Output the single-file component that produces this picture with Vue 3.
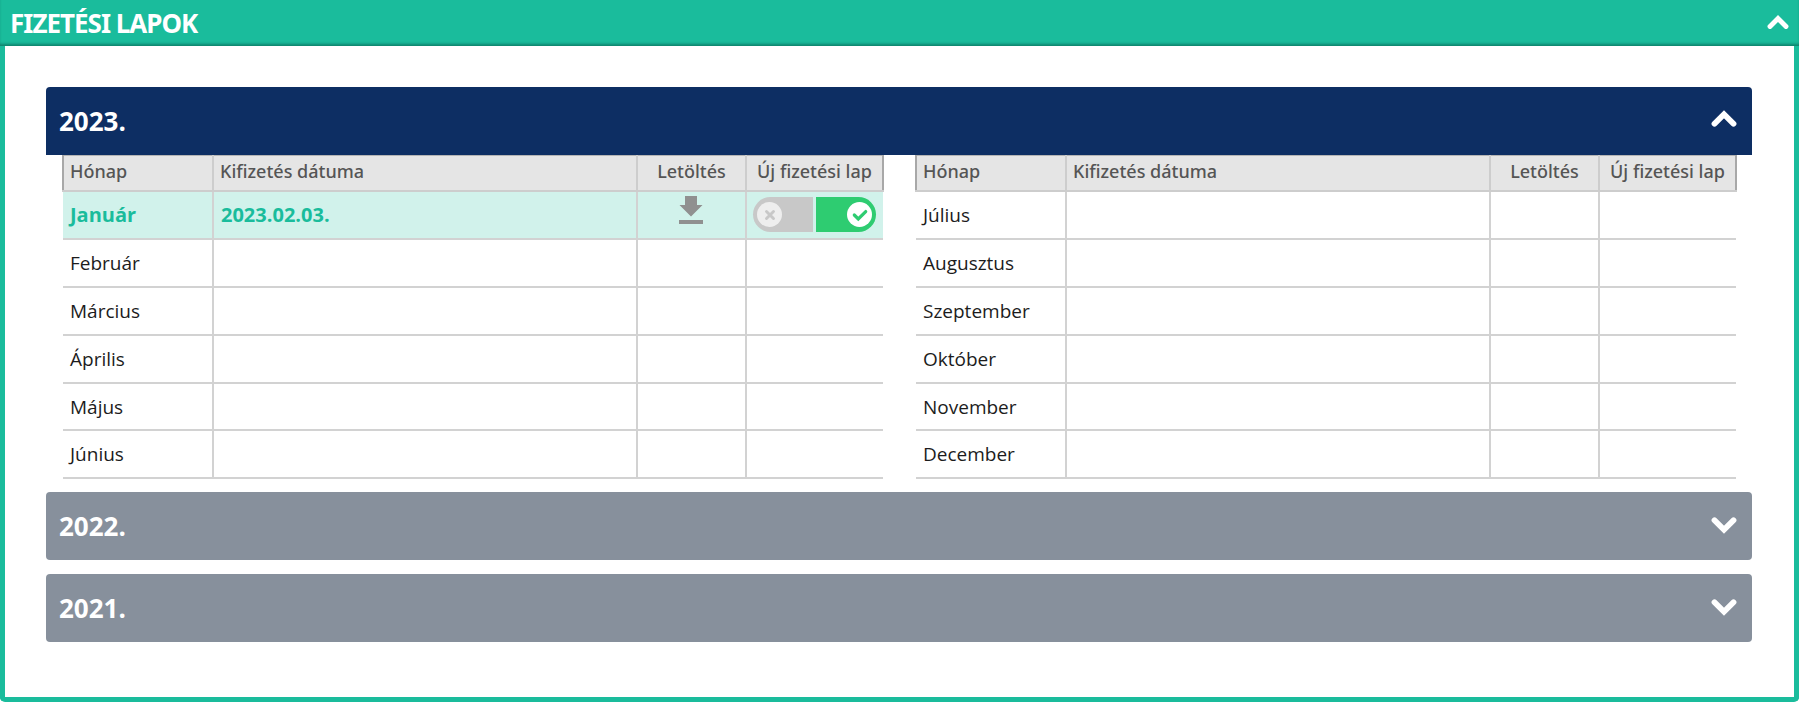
<script setup>
const left = ['Február', 'Március', 'Április', 'Május', 'Június']
const right = ['Július', 'Augusztus', 'Szeptember', 'Október', 'November', 'December']
</script>

<template>
  <div class="panel">
    <div class="bar">
      <span class="bar-title">FIZETÉSI LAPOK</span>
      <svg class="chev bar-chev" viewBox="0 0 26 18"><path d="M4 14 13 5l9 9" /></svg>
    </div>
    <div class="body">
      <div class="year active">
        <span>2023.</span>
        <svg class="chev chev-up" viewBox="0 0 26 18"><path d="M4 14 13 5l9 9" /></svg>
      </div>
      <div class="tables">
        <table>
          <thead>
            <tr><th class="c1">Hónap</th><th class="c2">Kifizetés dátuma</th><th class="c3 ctr">Letöltés</th><th class="c4 ctr">Új fizetési lap</th></tr>
          </thead>
          <tbody>
            <tr class="hit">
              <td>Január</td>
              <td>2023.02.03.</td>
              <td class="ctr">
                <svg class="dl" viewBox="0 0 24 28"><path d="M6 0h12v9h5.500L12 20.500.500 9H6zM0 24h24v4H0z" /></svg>
              </td>
              <td class="tg-cell">
                <div class="toggle">
                  <div class="tg-off"><span class="knob knob-off"><svg viewBox="0 0 12 12"><path d="M3 3l6 6M9 3l-6 6" /></svg></span></div>
                  <div class="tg-on"><span class="knob knob-on"><svg viewBox="0 0 14 12"><path d="M2 6l3.500 3.500L12 3" /></svg></span></div>
                </div>
              </td>
            </tr>
            <tr v-for="m in left" :key="m"><td>{{ m }}</td><td></td><td></td><td></td></tr>
          </tbody>
        </table>
        <table>
          <thead>
            <tr><th class="c1">Hónap</th><th class="c2">Kifizetés dátuma</th><th class="c3 ctr">Letöltés</th><th class="c4 ctr">Új fizetési lap</th></tr>
          </thead>
          <tbody>
            <tr class="tall" v-for="m in right" :key="m"><td>{{ m }}</td><td></td><td></td><td></td></tr>
          </tbody>
        </table>
      </div>
      <div class="year closed first">
        <span>2022.</span>
        <svg class="chev chev-down" viewBox="0 0 26 18"><path d="M4 4l9 9 9-9" /></svg>
      </div>
      <div class="year closed">
        <span>2021.</span>
        <svg class="chev chev-down" viewBox="0 0 26 18"><path d="M4 4l9 9 9-9" /></svg>
      </div>
    </div>
  </div>
</template>

<style>
html, body { margin: 0; background: #fff; }
</style>

<style scoped>
.panel {
  width: 1799px;
  height: 702px;
  box-sizing: border-box;
  border: 5px solid #1abc9c;
  border-top: 0;
  border-radius: 5px;
  font-family: "Open Sans", "Noto Sans", sans-serif;
  display: flex;
  flex-direction: column;
}
.bar {
  height: 46px;
  margin: 0 -5px;
  padding: 0 9px 0 10px;
  background: #1abc9c;
  box-shadow: inset 0 -3px 3px -1px rgba(0, 60, 50, .45);
  display: flex;
  align-items: center;
  justify-content: space-between;
  color: #fff;
  flex: none;
}
.bar-title { font-family: "Noto Sans", sans-serif; font-size: 26px; font-weight: 700; letter-spacing: -1px; }
.chev { width: 28px; height: 19px; fill: none; stroke: #fff; stroke-width: 5.500; stroke-linecap: round; stroke-linejoin: miter; flex: none; }
.chev-up { margin-bottom: 5px; }
.chev-down { margin-bottom: 2px; }
.bar-chev { width: 24px; height: 16px; margin-bottom: 3px; }
.body { padding: 41px 42px 0 41px; flex: 1; }
.year {
  height: 68px;
  box-sizing: border-box;
  padding: 0 14px 0 13px;
  display: flex;
  align-items: center;
  justify-content: space-between;
  color: #fff;
  font-size: 26px;
  font-weight: 700;
}
.active { background: #0d2e63; border-radius: 4px 4px 0 0; }
.closed { background: #87909c; border-radius: 4px; margin-top: 14px; }
.first { margin-top: 13px; }
.tables { display: flex; justify-content: space-between; padding: 0 15px 0 16px; }
table { width: 822px; border-collapse: collapse; table-layout: fixed; font-size: 19px; color: #1c1c1c; }
th {
  height: 35px;
  padding: 0 6px 3px;
  box-sizing: border-box;
  background: #e5e5e5;
  color: #555;
  font-family: "Noto Sans", sans-serif;
  font-size: 18px;
  font-weight: 500;
  text-align: left;
  border: 2px solid #cdcdcd;
  border-top: 1px solid #b4b4b4;
  white-space: nowrap;
}
th:first-child { border-left-color: #a8a8a8; }
th:last-child { border-right-color: #a8a8a8; }
th.ctr { text-align: center; padding: 0 0 3px; }
.c1 { width: 150px; }
.c3 { width: 109px; }
.c4 { width: 137px; }
td {
  height: 47.800px;
  padding: 0 7px;
  box-sizing: border-box;
  border-bottom: 2px solid #d2d2d2;
  border-left: 2px solid #d2d2d2;
  white-space: nowrap;
}
td:first-child { border-left: 0; }
td.ctr { text-align: center; padding: 0 2px 0 0; }
.hit td { height: 48.800px; background: #d1f2eb; color: #1abc9c; font-weight: 700; font-size: 20px; }
.tall:first-child td { height: 48.800px; }
.dl { width: 24px; height: 28px; fill: #909090; display: block; margin: -9px auto 0; }
td.tg-cell { padding: 0 0 0 6px; }
.toggle { display: flex; width: 123px; height: 35px; gap: 3px; }
.tg-off, .tg-on { flex: 1; display: flex; align-items: center; }
.tg-off { background: #c8c8c8; border-radius: 18px 0 0 18px; padding-left: 4px; }
.tg-on { background: #2ecc71; border-radius: 0 18px 18px 0; justify-content: flex-end; padding-right: 4px; }
.knob { width: 25px; height: 25px; border-radius: 50%; background: #fff; display: flex; align-items: center; justify-content: center; }
.knob svg { fill: none; stroke-linecap: round; }
.knob-off { background: #eee; }
.knob-off svg { width: 14px; height: 14px; stroke: #c8c8c8; stroke-width: 2.500; }
.knob-on svg { width: 16px; height: 14px; stroke: #2ecc71; stroke-width: 2.800; }
</style>
